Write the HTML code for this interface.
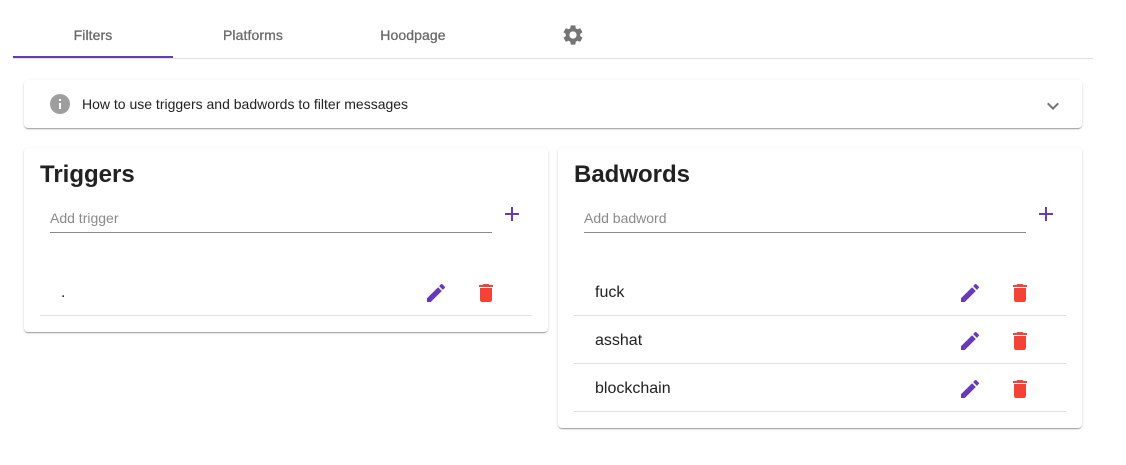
<!DOCTYPE html>
<html><head><style>
*{box-sizing:border-box;margin:0;padding:0}
body{width:1126px;height:465px;background:#fff;font-family:"Liberation Sans",sans-serif;position:relative;overflow:hidden;color:#212121}
.abs{position:absolute}
.tab{position:absolute;top:27px;width:160px;text-align:center;font-size:14px;font-weight:normal;color:#6a6a6a;letter-spacing:.1px;-webkit-text-stroke:0.3px #6a6a6a}
.card{position:absolute;background:#fff;border-radius:4px;box-shadow:0 2px 1px -1px rgba(0,0,0,.2),0 1px 1px 0 rgba(0,0,0,.14),0 1px 3px 0 rgba(0,0,0,.12)}
.title{position:absolute;left:16px;top:13px;font-size:24px;font-weight:bold;color:#212121}
.inp{position:absolute;left:26px;top:60px;width:442px;height:25px;border-bottom:1px solid #8a8a8a;font-size:14px;color:#8a8a8a}
.plus{position:absolute;left:480px;top:58px}
.row{position:absolute;left:16px;width:492px;height:48px;border-bottom:1px solid #e0e0e0}
.row span{position:absolute;left:21px;top:16px;font-size:16px;color:#212121}
.row .e{position:absolute;left:384px;top:13px}
.row .d{position:absolute;left:434px;top:13px}
</style></head><body>
<div class="tab" style="left:13px">Filters</div>
<div class="tab" style="left:173px">Platforms</div>
<div class="tab" style="left:333px">Hoodpage</div>
<svg class="abs" style="left:561px;top:23px" width="24" height="24" viewBox="0 0 24 24"><path fill="#757575" d="M19.14 12.94c.04-.3.06-.61.06-.94 0-.32-.02-.64-.07-.94l2.03-1.58a.49.49 0 0 0 .12-.61l-1.920-3.320a.49.49 0 0 0-.59-.22l-2.39.96c-.5-.38-1.03-.7-1.62-.94l-.36-2.54a.48.48 0 0 0-.48-.41h-3.84c-.24 0-.43.17-.47.41l-.36 2.54c-.59.24-1.13.57-1.62.94l-2.39-.96c-.22-.08-.47 0-.59.22L2.74 8.87c-.12.21-.8.47.12.61l2.03 1.58c-.5.3-.07.62-.07.94s.2.64.07.94l-2.03 1.58a.49.49 0 0 0-.12.61l1.92 3.32c.12.22.37.29.59.22l2.39-.96c.5.38 1.03.7 1.62.94l.36 2.54c.5.24.24.41.48.41h3.84c.24 0 .44-.17.47-.41l.36-2.54c.59-.24 1.13-.56 1.62-.94l2.39.96c.22.08.47 0 .59-.22l1.92-3.32c.12-.22.07-.47-.12-.61l-2.010-1.58zM12 15.6c-1.98 0-3.6-1.62-3.6-3.6s1.62-3.6 3.6-3.6 3.6 1.62 3.6 3.6-1.62 3.6-3.6 3.6z"/></svg>
<div class="abs" style="left:13px;top:58px;width:1080px;height:1px;background:#e0e0e0"></div>
<div class="abs" style="left:13px;top:56px;width:160px;height:2px;background:#673ab7"></div>

<div class="card" style="left:24px;top:80px;width:1058px;height:48px">
<svg class="abs" style="left:24px;top:12px" width="24" height="24" viewBox="0 0 24 24"><path fill="#9e9e9e" d="M12 2a10 10 0 1 0 0 20 10 10 0 0 0 0-20zm1 15h-2v-6h2v6zm0-8h-2V7h2v2z"/></svg>
<div class="abs" style="left:58px;top:16px;font-size:14px;color:#212121">How to use triggers and badwords to filter messages</div>
<svg class="abs" style="left:1017px;top:14px" width="24" height="24" viewBox="0 0 24 24"><path fill="#757575" d="M7.41 8.59 12 13.17l4.59-4.58L18 10l-6 6-6-6z"/></svg>
</div>

<div class="card" style="left:24px;top:148px;width:524px;height:184px">
<div class="title">Triggers</div>
<div class="inp"><span style="position:absolute;top:2px">Add trigger</span></div>
<svg class="plus" width="16" height="16" viewBox="0 0 16 16"><path stroke="#673ab7" stroke-width="2" d="M1 8h14M8 1v14"/></svg>
<div class="row" style="top:120px"><span>.</span>
<svg class="e" width="24" height="24" viewBox="0 0 24 24"><path fill="#673ab7" d="M3 17.25V21h3.75L17.81 9.94l-3.75-3.75L3 17.25zM20.71 7.04a1 1 0 0 0 0-1.41l-2.34-2.34a1 1 0 0 0-1.41 0l-1.83 1.83 3.75 3.75 1.83-1.83z"/></svg>
<svg class="d" width="24" height="24" viewBox="0 0 24 24"><path fill="#f44336" d="M6 19c0 1.1.9 2 2 2h8c1.1 0 2-.9 2-2V7H6v12zM19 4h-3.5l-1-1h-5l-1 1H5v2h14V4z"/></svg></div>
</div>

<div class="card" style="left:558px;top:148px;width:524px;height:280px">
<div class="title">Badwords</div>
<div class="inp"><span style="position:absolute;top:2px">Add badword</span></div>
<svg class="plus" width="16" height="16" viewBox="0 0 16 16"><path stroke="#673ab7" stroke-width="2" d="M1 8h14M8 1v14"/></svg>
<div class="row" style="top:120px"><span>fuck</span>
<svg class="e" width="24" height="24" viewBox="0 0 24 24"><path fill="#673ab7" d="M3 17.25V21h3.75L17.81 9.94l-3.75-3.75L3 17.25zM20.71 7.04a1 1 0 0 0 0-1.41l-2.34-2.34a1 1 0 0 0-1.41 0l-1.83 1.83 3.75 3.75 1.83-1.83z"/></svg>
<svg class="d" width="24" height="24" viewBox="0 0 24 24"><path fill="#f44336" d="M6 19c0 1.1.9 2 2 2h8c1.1 0 2-.9 2-2V7H6v12zM19 4h-3.5l-1-1h-5l-1 1H5v2h14V4z"/></svg></div>
<div class="row" style="top:168px"><span>asshat</span>
<svg class="e" width="24" height="24" viewBox="0 0 24 24"><path fill="#673ab7" d="M3 17.25V21h3.75L17.81 9.94l-3.75-3.75L3 17.25zM20.71 7.04a1 1 0 0 0 0-1.41l-2.34-2.34a1 1 0 0 0-1.41 0l-1.83 1.83 3.75 3.75 1.83-1.83z"/></svg>
<svg class="d" width="24" height="24" viewBox="0 0 24 24"><path fill="#f44336" d="M6 19c0 1.1.9 2 2 2h8c1.1 0 2-.9 2-2V7H6v12zM19 4h-3.5l-1-1h-5l-1 1H5v2h14V4z"/></svg></div>
<div class="row" style="top:216px"><span>blockchain</span>
<svg class="e" width="24" height="24" viewBox="0 0 24 24"><path fill="#673ab7" d="M3 17.25V21h3.75L17.81 9.94l-3.75-3.75L3 17.25zM20.71 7.04a1 1 0 0 0 0-1.41l-2.34-2.34a1 1 0 0 0-1.41 0l-1.83 1.83 3.75 3.75 1.83-1.83z"/></svg>
<svg class="d" width="24" height="24" viewBox="0 0 24 24"><path fill="#f44336" d="M6 19c0 1.1.9 2 2 2h8c1.1 0 2-.9 2-2V7H6v12zM19 4h-3.5l-1-1h-5l-1 1H5v2h14V4z"/></svg></div>
</div>
</body></html>
